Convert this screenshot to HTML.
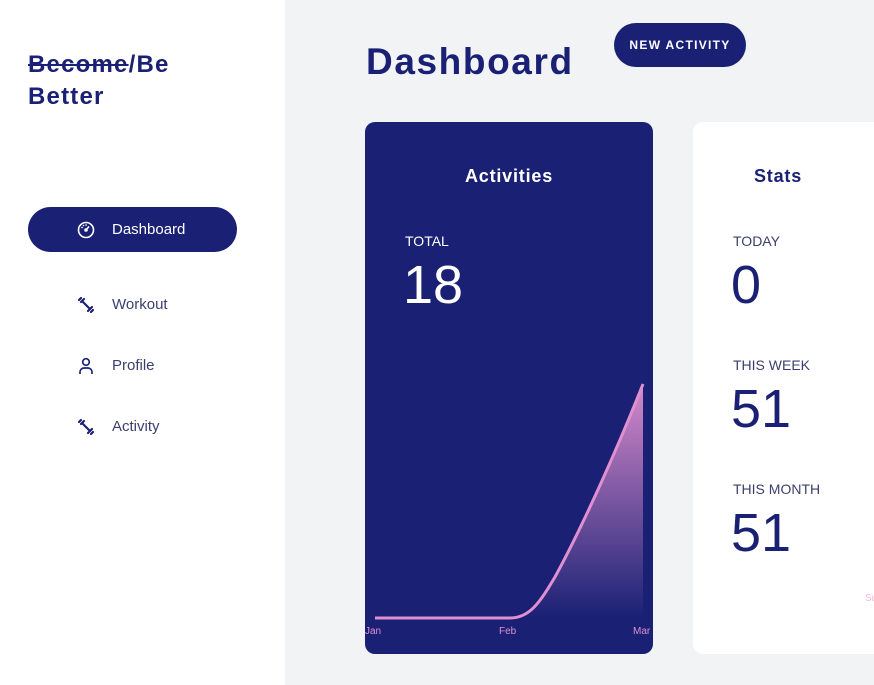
<!DOCTYPE html>
<html><head><meta charset="utf-8"><style>
*{margin:0;padding:0;box-sizing:border-box}
body{width:874px;height:685px;overflow:hidden;background:#f2f3f5;font-family:"Liberation Sans",sans-serif;position:relative;color:#1a2175}
.side{position:absolute;left:0;top:0;width:285px;height:685px;background:#fff}
.logo{position:absolute;left:28px;top:49px;font-weight:bold;font-size:24px;letter-spacing:1.2px;line-height:32px;color:#1a2175}
.logo s{text-decoration-thickness:2px}
.nav{position:absolute;left:28px;width:209px;height:45px;display:flex;align-items:center;font-size:15px;color:#3a3f6e}
.nav svg{position:absolute;left:49px}
.nav span{position:absolute;left:84px}
.nav.active{background:#1a2175;border-radius:23px;color:#fff}
h1{position:absolute;left:366px;top:41px;font-size:37px;letter-spacing:1.6px;font-weight:bold;color:#1a2175}
.btn{position:absolute;left:614px;top:23px;width:132px;height:44px;background:#1a2175;border-radius:22px;color:#fff;font-size:12px;font-weight:bold;letter-spacing:1.3px;text-align:center;line-height:44px}
.card1{position:absolute;left:365px;top:122px;width:288px;height:532px;background:#1a2175;border-radius:10px;overflow:hidden;color:#fff}
.card2{position:absolute;left:693px;top:122px;width:200px;height:532px;background:#fff;border-radius:10px;overflow:hidden}
.ct{position:absolute;font-weight:bold;font-size:18px;letter-spacing:.8px}
.lbl{position:absolute;font-size:14px}
.num{position:absolute;font-size:54px;font-weight:normal;line-height:54px}
</style></head><body>
<div class="side">
<div class="logo"><s>Become</s>/Be<br>Better</div>
<div class="nav active" style="top:207px"><svg width="18" height="18" viewBox="0 0 18 18" fill="none" stroke="#fff" stroke-width="1.6"><circle cx="9" cy="9" r="7.5"/><path d="M9 9l3-3.5"/><circle cx="9" cy="9" r="1" fill="#fff"/><path d="M5 6.5h.1M6.5 4.5h.1M9 4h.1" stroke-linecap="round"/></svg><span>Dashboard</span></div>
<div class="nav" style="top:282px"><svg width="18" height="18" viewBox="0 0 18 18" fill="none" stroke="#1a2175" stroke-width="2.2" stroke-linecap="round"><path d="M5 5l8 8M2 4l2-2M4 6l3-3M14 16l2-2M11 15l4-4"/></svg><span>Workout</span></div>
<div class="nav" style="top:343px"><svg width="18" height="18" viewBox="0 0 18 18" fill="none" stroke="#1a2175" stroke-width="1.7"><circle cx="9" cy="5" r="3.3"/><path d="M3 17v-2a4 4 0 0 1 4-4h4a4 4 0 0 1 4 4v2"/></svg><span>Profile</span></div>
<div class="nav" style="top:404px"><svg width="18" height="18" viewBox="0 0 18 18" fill="none" stroke="#1a2175" stroke-width="2.2" stroke-linecap="round"><path d="M5 5l8 8M2 4l2-2M4 6l3-3M14 16l2-2M11 15l4-4"/></svg><span>Activity</span></div>
</div>
<h1>Dashboard</h1>
<div class="btn">NEW ACTIVITY</div>
<div class="card1">
<div class="ct" style="left:0;width:288px;text-align:center;top:44px">Activities</div>
<div class="lbl" style="left:40px;top:111px">TOTAL</div>
<div class="num" style="left:38px;top:136px">18</div>
<svg width="288" height="532" style="position:absolute;left:0;top:0">
<defs><linearGradient id="g" x1="0" y1="0" x2="0" y2="1"><stop offset="0" stop-color="#e08fd0" stop-opacity=".95"/><stop offset="1" stop-color="#e08fd0" stop-opacity="0"/></linearGradient></defs>
<path d="M145 496C165 496 175 480 190 455C220 400 255 320 278 262L278 496Z" fill="url(#g)"/>
<path d="M10 496H145C165 496 175 480 190 455C220 400 255 320 278 262" fill="none" stroke="#e08fd0" stroke-width="3"/>
<text x="0" y="512" font-size="10" fill="#e08fd0" font-family="Liberation Sans">Jan</text>
<text x="134" y="512" font-size="10" fill="#e08fd0" font-family="Liberation Sans">Feb</text>
<text x="268" y="512" font-size="10" fill="#e08fd0" font-family="Liberation Sans">Mar</text>
</svg>
</div>
<div class="card2">
<div class="ct" style="left:61px;top:44px">Stats</div>
<div class="lbl" style="left:40px;top:111px;color:#3a3f6e">TODAY</div>
<div class="num" style="left:38px;top:136px">0</div>
<div class="lbl" style="left:40px;top:235px;color:#3a3f6e">THIS WEEK</div>
<div class="num" style="left:38px;top:260px">51</div>
<div class="lbl" style="left:40px;top:359px;color:#3a3f6e">THIS MONTH</div>
<div class="num" style="left:38px;top:384px">51</div>
<div style="position:absolute;left:172px;top:471px;font-size:10px;color:#f0b8d8">Su</div>
</div>
</body></html>
